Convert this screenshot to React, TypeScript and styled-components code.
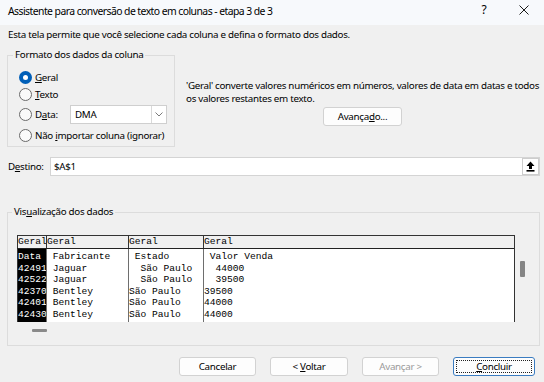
import React from 'react';
import styled, { createGlobalStyle } from 'styled-components';

const GlobalStyle = createGlobalStyle`
  html, body {
    margin: 0;
    padding: 0;
    background: #f0f0f0;
  }
`;

const Window = styled.div`
  width: 544px;
  height: 382px;
  display: flex;
  flex-direction: column;
  background: #f0f0f0;
  font-family: 'Noto Sans', 'Open Sans', sans-serif;
  font-size: 9.8px;
  letter-spacing: -0.3px;
  color: #000;
  overflow: hidden;
`;

const TitleBar = styled.div`
  height: 25px;
  flex: 0 0 25px;
  display: flex;
  align-items: center;
  padding-left: 8px;
  background: #f7f9fc;
`;

const Title = styled.div`
  flex: 1;
  font-size: 10.4px;
  letter-spacing: -0.55px;
  margin-top: -3px;
  white-space: nowrap;
`;

const TitleButton = styled.div`
  width: 40px;
  height: 25px;
  display: flex;
  align-items: center;
  justify-content: center;
  font-size: 12px;
  margin-top: -6px;
`;

const Body = styled.div`
  flex: 1;
  display: flex;
  flex-direction: column;
  padding: 0 5px 0 7px;
`;

const Intro = styled.div`
  margin: 3px 0 0 1px;
  line-height: 14px;
  white-space: nowrap;
`;

const TopRow = styled.div`
  display: flex;
  height: 105px;
`;

const Group = styled.fieldset<{ $w: number; $h: number }>`
  box-sizing: border-box;
  width: ${(p) => p.$w}px;
  height: ${(p) => p.$h}px;
  flex: 0 0 auto;
  margin: 0;
  padding: 0 0 0 10px;
  border: 1px solid #dcdcdc;
  border-radius: 0;
  min-width: 0;
`;

const Legend = styled.legend`
  margin-left: -5px;
  padding: 0 2px;
  line-height: 14px;
  white-space: nowrap;
`;

const FormatGroup = styled(Group)`
  margin-top: 6px;
  display: flex;
  flex-direction: column;
  padding-top: 7px;
`;

const RadioRow = styled.div<{ $h: number }>`
  height: ${(p) => p.$h}px;
  flex: 0 0 auto;
  display: flex;
  align-items: center;
  white-space: nowrap;
`;

const Radio = styled.span<{ $on?: boolean }>`
  box-sizing: border-box;
  width: 13px;
  height: 13px;
  border-radius: 50%;
  margin: 0 3px 0 1px;
  flex: 0 0 13px;
  background: ${(p) => (p.$on ? '#005fb8' : '#fafafa')};
  border: ${(p) => (p.$on ? 'none' : '1px solid #6a6a6a')};
  display: flex;
  align-items: center;
  justify-content: center;
  &::after {
    content: '';
    display: ${(p) => (p.$on ? 'block' : 'none')};
    width: 5px;
    height: 5px;
    border-radius: 50%;
    background: #fff;
  }
`;

const DataLabel = styled.span`
  width: 35px;
`;

const Key = styled.span`
  text-decoration: underline;
  text-underline-offset: 1px;
`;

const Select = styled.div`
  box-sizing: border-box;
  width: 97px;
  height: 19px;
  background: #fff;
  border: 1px solid #cfcfcf;
  display: flex;
  align-items: center;
`;

const SelectValue = styled.span`
  flex: 1;
  padding-left: 4px;
`;

const SelectArrow = styled.span`
  width: 14px;
  height: 17px;
  border-left: 1px solid #d9d9d9;
  display: flex;
  align-items: center;
  justify-content: center;
`;

const DescPanel = styled.div`
  flex: 1;
  min-width: 0;
  display: flex;
  flex-direction: column;
  padding: 37px 0 0 11px;
`;

const DescText = styled.div`
  line-height: 13px;
  white-space: nowrap;
`;

const Button = styled.div<{ $w?: number; $disabled?: boolean; $default?: boolean }>`
  box-sizing: border-box;
  width: ${(p) => p.$w ?? 78}px;
  height: 19px;
  display: flex;
  align-items: center;
  justify-content: center;
  background: #fdfdfd;
  border: 1px solid ${(p) => (p.$default ? '#3a7cc1' : '#d2d2d2')};
  border-radius: 3px;
  color: ${(p) => (p.$disabled ? '#9a9a9a' : '#000')};
  outline: ${(p) => (p.$default ? '1px dotted #222' : 'none')};
  outline-offset: -4px;
  white-space: pre;
`;

const AdvancedButton = styled(Button)`
  align-self: center;
  margin-top: 2px;
`;

const DestRow = styled.div`
  display: flex;
  align-items: center;
  margin-top: 10px;
  margin-right: -1px;
`;

const DestLabel = styled.span`
  width: 42px;
  margin-left: 1px;
`;

const DestInput = styled.div`
  box-sizing: border-box;
  flex: 1;
  height: 19px;
  background: #fff;
  border: 1px solid #d4d4d4;
  display: flex;
  align-items: center;
`;

const DestValue = styled.span`
  flex: 1;
  padding-left: 3px;
`;

const RefButton = styled.span`
  box-sizing: border-box;
  width: 17px;
  height: 17px;
  border: 1px solid #cdcdcd;
  background: #fff;
  display: flex;
  align-items: center;
  justify-content: center;
`;

const PreviewGroup = styled(Group)`
  margin-top: 29px;
  padding: 16px 0 0 9px;
  display: flex;
`;

const GridColumn = styled.div`
  display: flex;
  flex-direction: column;
  width: 498px;
`;

const Grid = styled.div`
  box-sizing: border-box;
  height: 87px;
  border: 1px solid #333;
  border-bottom: none;
  border-left: none;
  display: flex;
  flex-direction: column;
  font-family: 'Liberation Mono', 'DejaVu Sans Mono', monospace;
  font-size: 9.6px;
  letter-spacing: 0;
  background: #fff;
`;

const HeaderRow = styled.div`
  display: flex;
  height: 12px;
  background: #f0f0f0;
  border-bottom: 1px solid #222;
`;

const HeaderCell = styled.div<{ $w?: number }>`
  box-sizing: border-box;
  ${(p) => (p.$w ? `width: ${p.$w}px; flex: 0 0 ${p.$w}px;` : 'flex: 1;')}
  white-space: pre;
  overflow: hidden;
  line-height: 12px;
  border-left: 1px solid #333;
`;

const BodyRows = styled.div`
  flex: 1;
  display: flex;
`;

const BodyCol = styled.div<{ $w?: number; $dark?: boolean; $line: string }>`
  box-sizing: border-box;
  ${(p) => (p.$w ? `width: ${p.$w}px; flex: 0 0 ${p.$w}px;` : 'flex: 1;')}
  padding-top: 2px;
  border-left: 1px solid ${(p) => p.$line};
  background: ${(p) => (p.$dark ? '#000' : 'transparent')};
  color: ${(p) => (p.$dark ? '#fff' : '#000')};
  overflow: hidden;
`;

const BodyCell = styled.div`
  height: 11.6px;
  line-height: 11.6px;
  white-space: pre;
`;

const HScroll = styled.div`
  height: 14px;
  padding: 7px 0 0 15px;
  box-sizing: border-box;
`;

const HThumb = styled.div`
  width: 15px;
  height: 3px;
  background: #8a8a8a;
  border-radius: 1px;
`;

const VScroll = styled.div`
  width: 14px;
  padding: 26px 0 0 5px;
  box-sizing: border-box;
`;

const VThumb = styled.div`
  width: 5px;
  height: 16px;
  background: #858585;
  border-radius: 1px;
`;

const Footer = styled.div`
  display: flex;
  justify-content: flex-end;
  gap: 14px;
  padding: 11px 4px 0 0;
`;

const widths = [29, 82, 75, 0];
const headers = ['Geral', 'Geral', 'Geral', 'Geral'];
const columns = [
  ['Data', '42491', '42522', '42370', '42401', '42430'],
  [' Fabricante', ' Jaguar', ' Jaguar', ' Bentley', ' Bentley', ' Bentley'],
  [' Estado', '  São Paulo', '  São Paulo', 'São Paulo', 'São Paulo', 'São Paulo'],
  [' Valor Venda', '  44000', '  39500', '39500', '44000', '44000'],
];

const Chevron = () => (
  <svg width="8" height="5" viewBox="0 0 8 5">
    <path d="M0.5 0.5 L4 4 L7.5 0.5" fill="none" stroke="#7a7a7a" strokeWidth="1" />
  </svg>
);

const CloseIcon = () => (
  <svg width="10" height="10" viewBox="0 0 10 10">
    <path d="M0.5 0.5 L9.5 9.5 M9.5 0.5 L0.5 9.5" stroke="#1a1a1a" strokeWidth="1" />
  </svg>
);

const UploadIcon = () => (
  <svg width="9" height="11" viewBox="0 0 9 11">
    <path d="M4.5 0.5 L8.5 5 L6 5 L6 8 L3 8 L3 5 L0.5 5 Z" fill="#000" />
    <rect x="0.5" y="9" width="8" height="1.6" fill="#000" />
  </svg>
);

export default function App() {
  return (
    <>
      <GlobalStyle />
      <Window>
        <TitleBar>
          <Title>Assistente para conversão de texto em colunas - etapa 3 de 3</Title>
          <TitleButton>?</TitleButton>
          <TitleButton>
            <CloseIcon />
          </TitleButton>
        </TitleBar>
        <Body>
          <Intro>Esta tela permite que você selecione cada coluna e defina o formato dos dados.</Intro>
          <TopRow>
            <FormatGroup as="fieldset" $w={168} $h={99}>
              <Legend>Formato dos dados da coluna</Legend>
              <RadioRow $h={17}>
                <Radio $on />
                <span>
                  <Key>G</Key>eral
                </span>
              </RadioRow>
              <RadioRow $h={17}>
                <Radio />
                <span>
                  <Key>T</Key>exto
                </span>
              </RadioRow>
              <RadioRow $h={23}>
                <Radio />
                <DataLabel>
                  D<Key>a</Key>ta:
                </DataLabel>
                <Select>
                  <SelectValue>DMA</SelectValue>
                  <SelectArrow>
                    <Chevron />
                  </SelectArrow>
                </Select>
              </RadioRow>
              <RadioRow $h={19}>
                <Radio />
                <span>
                  Não <Key>i</Key>mportar coluna (ignorar)
                </span>
              </RadioRow>
            </FormatGroup>
            <DescPanel>
              <DescText>
                'Geral' converte valores numéricos em números, valores de data em datas e todos
                <br />
                os valores restantes em texto.
              </DescText>
              <AdvancedButton $w={79}>
                <span>
                  Avança<Key>d</Key>o...
                </span>
              </AdvancedButton>
            </DescPanel>
          </TopRow>
          <DestRow>
            <DestLabel>
              D<Key>e</Key>stino:
            </DestLabel>
            <DestInput>
              <DestValue>$A$1</DestValue>
              <RefButton>
                <UploadIcon />
              </RefButton>
            </DestInput>
          </DestRow>
          <PreviewGroup $w={533} $h={141}>
            <Legend>
              Vis<Key>u</Key>alização dos dados
            </Legend>
            <GridColumn>
              <Grid>
                <HeaderRow>
                  {headers.map((h, i) => (
                    <HeaderCell key={i} $w={widths[i]}>
                      {h}
                    </HeaderCell>
                  ))}
                </HeaderRow>
                <BodyRows>
                  {columns.map((col, i) => (
                    <BodyCol key={i} $w={widths[i]} $dark={i === 0} $line={i === 0 ? '#333' : '#6e6e6e'}>
                      {col.map((v, j) => (
                        <BodyCell key={j}>{v}</BodyCell>
                      ))}
                    </BodyCol>
                  ))}
                </BodyRows>
              </Grid>
              <HScroll>
                <HThumb />
              </HScroll>
            </GridColumn>
            <VScroll>
              <VThumb />
            </VScroll>
          </PreviewGroup>
          <Footer>
            <Button $w={77}>Cancelar</Button>
            <Button>
              <span>
                {'< '}
                <Key>V</Key>oltar
              </span>
            </Button>
            <Button $w={77} $disabled>
              Avançar &gt;
            </Button>
            <Button $w={82} $default>
              <span>
                <Key>C</Key>oncluir
              </span>
            </Button>
          </Footer>
        </Body>
      </Window>
    </>
  );
}
